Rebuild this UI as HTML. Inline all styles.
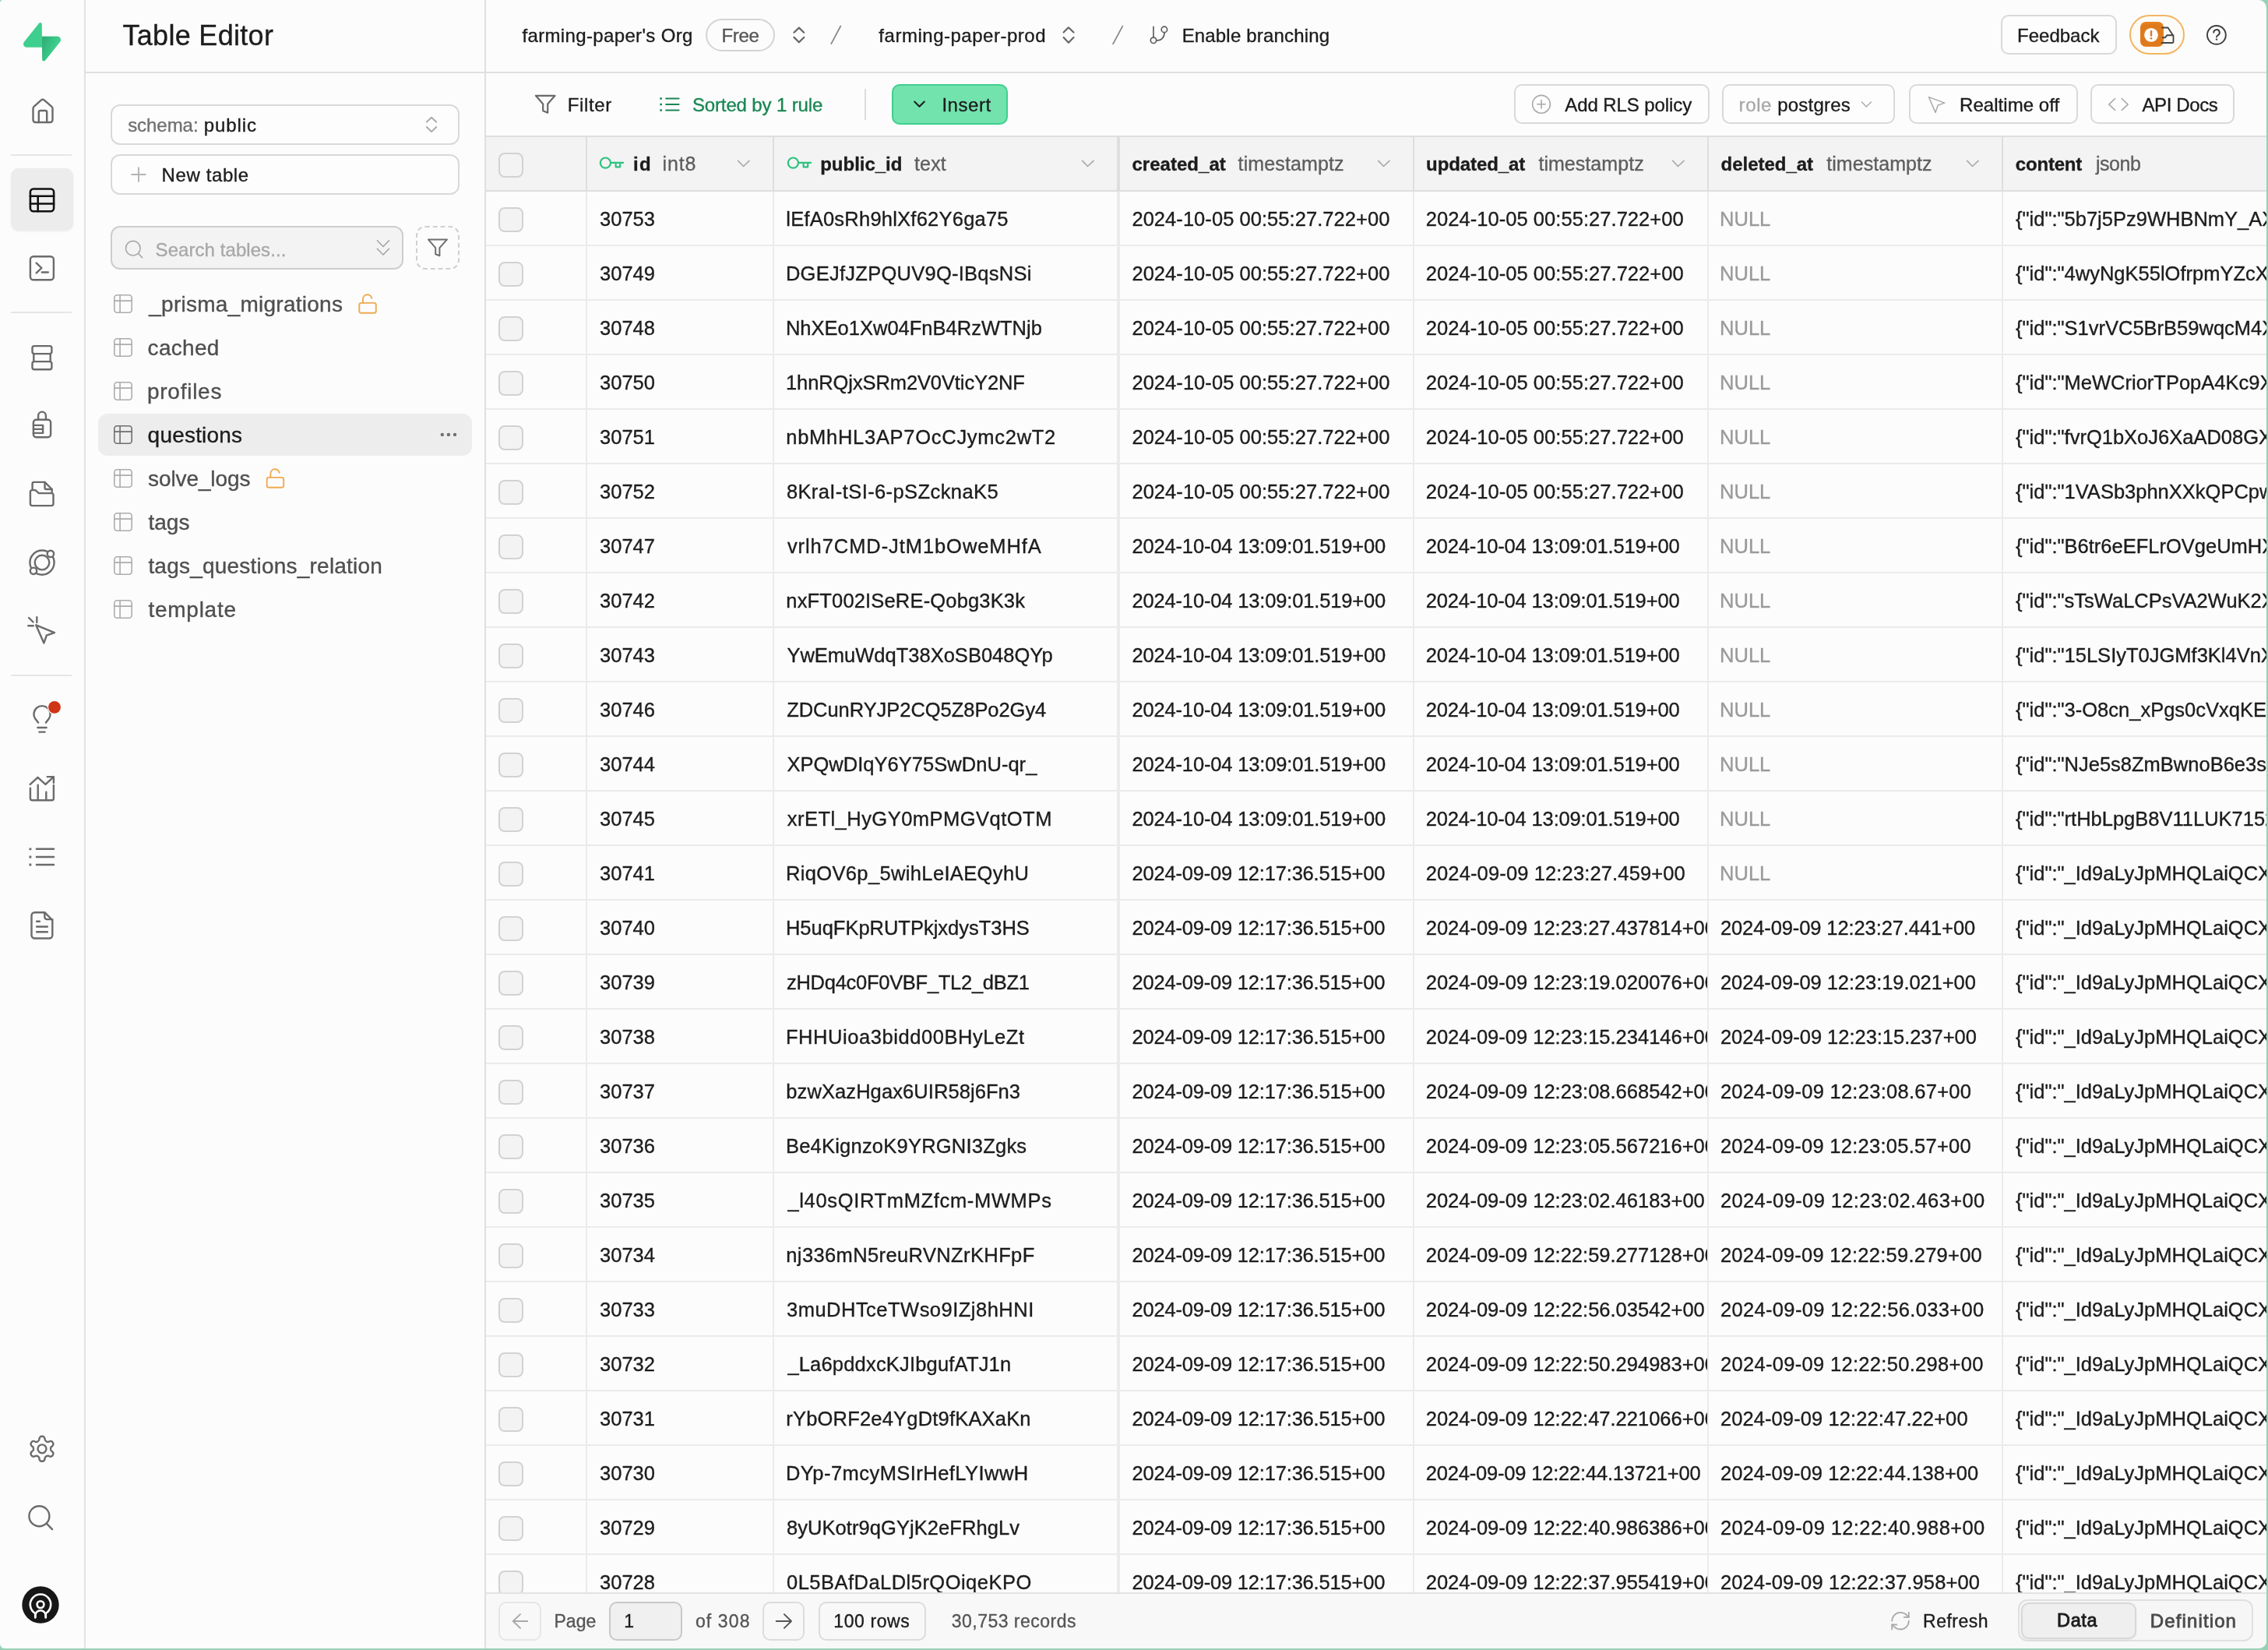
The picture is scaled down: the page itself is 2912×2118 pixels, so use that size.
<!DOCTYPE html><html><head><meta charset="utf-8"><style>
html,body{margin:0;padding:0;width:2912px;height:2118px;overflow:hidden;background:#97d1b5;}
#win{will-change:transform;position:absolute;left:0;top:0;width:2910px;height:2116px;background:#fcfcfc;border-radius:4px 10px 10px 6px;overflow:hidden;font-family:"Liberation Sans",sans-serif;}
.t{position:absolute;white-space:nowrap;-webkit-text-stroke:0.35px currentColor;}
.clip{position:absolute;overflow:hidden;}
</style></head><body><div id="win">
<div style="position:absolute;left:108px;top:0px;width:2px;height:2116px;background:#e2e2e2"></div>
<div style="position:absolute;left:14px;top:198px;width:78px;height:2px;background:#e6e6e6"></div>
<div style="position:absolute;left:14px;top:400px;width:78px;height:2px;background:#e6e6e6"></div>
<div style="position:absolute;left:14px;top:866px;width:78px;height:2px;background:#e6e6e6"></div>
<div style="position:absolute;left:14px;top:216px;width:80px;height:80px;background:#ececec;border-radius:10px;box-shadow:0 1px 3px rgba(0,0,0,0.07)"></div>
<svg style="position:absolute;left:0;top:0" width="108" height="2116" viewBox="0 0 108 2116" fill="none" stroke-width="2.4" stroke-linecap="round" stroke-linejoin="round"><g stroke="#6b6b6b"><path d="M42.5 154 V139.2 a3 3 0 0 1 1.1 -2.3 L53 128.4 a3 3 0 0 1 3.6 0 L66.4 136.9 a3 3 0 0 1 1.1 2.3 V154 a3 3 0 0 1 -3 3 H45.5 a3 3 0 0 1 -3 -3 Z"/><path d="M49.8 157 V144 a2 2 0 0 1 2 -2 H58.2 a2 2 0 0 1 2 2 V157"/></g><g stroke="#111111" stroke-width="2.6"><rect x="38.9" y="242.5" width="30.2" height="28.8" rx="4"/><path d="M38.9 251.8 H69.1 M38.9 261.5 H69.1 M48.7 251.8 V271.3"/></g><g stroke="#6b6b6b"><rect x="38.9" y="329.3" width="30" height="30" rx="4"/><path d="M46.7 337.6 L53.4 344 L46.7 350.4 M53.8 349.5 H61.8"/></g><g stroke="#6b6b6b"><rect x="41.5" y="444.1" width="24.9" height="10" rx="2.5"/><path d="M43.3 454.1 V464.1 M64.7 454.1 V464.1"/><rect x="41.5" y="464.1" width="24.9" height="10.2" rx="2.5"/></g><g stroke="#6b6b6b"><path d="M49.1 538.8 V533.5 a4.9 4.9 0 0 1 9.8 0 V538.8"/><rect x="42.9" y="538.8" width="22.2" height="22.4" rx="3.5"/><path d="M42.9 545.9 H55.1 V555.9 H42.9 M42.9 550.9 H55.1"/></g><g stroke="#6b6b6b"><path d="M41.6 628.7 V620.9 a2 2 0 0 1 2 -2 H57.5 L66.7 628 V632.6"/><path d="M57.5 618.9 V626 a2 2 0 0 0 2 2 H66.7"/><path d="M38.9 646.6 V631.6 a2.5 2.5 0 0 1 2.5 -2.5 H45.4 L49.8 633.1 H66 a2.5 2.5 0 0 1 2.5 2.5 V646.6 a2.5 2.5 0 0 1 -2.5 2.5 H41.4 a2.5 2.5 0 0 1 -2.5 -2.5 Z"/></g><g stroke="#6b6b6b"><circle cx="54" cy="722.1" r="15.6"/><circle cx="54" cy="722.1" r="9.3"/><circle cx="64.9" cy="710.9" r="4.2" fill="#fcfcfc"/><circle cx="43" cy="732.8" r="4.2" fill="#fcfcfc"/></g><g stroke="#6b6b6b"><path d="M46.2 802.3 L70 812.1 L59.8 815.7 L56.4 825.4 Z"/><path d="M37 793 L42.6 798.5 M36.3 803.2 H42.8 M47.3 792.2 V799"/></g><g stroke="#6b6b6b"><path d="M49.1 927.6 L45.2 922.6 A10.6 10.6 0 1 1 62.8 922.6 L58.9 927.6"/><path d="M48.4 934 H59.6 M50.4 939.6 H57.6"/></g><circle cx="70" cy="907.8" r="9.2" fill="#fcfcfc" stroke="none"/><circle cx="70" cy="907.8" r="7.9" fill="#cf3415" stroke="none"/><g stroke="#6b6b6b"><path d="M38.9 1011.6 V1024.8 a2.5 2.5 0 0 0 2.5 2.5 H66.4 a2.5 2.5 0 0 0 2.5 -2.5 V1008 M48.7 1007.6 V1027.3 M59.3 1016.7 V1027.3 M38.7 1006.9 L48.5 997.8 L58.4 1006.9 L68.9 997.1 M60.7 997.1 H68.9 V1004.7"/></g><g stroke="#6b6b6b"><path d="M46.9 1089.8 H69.1 M46.9 1100 H69.1 M46.9 1110 H69.1"/><path d="M38.9 1089.8 h0.01 M38.9 1100 h0.01 M38.9 1110 h0.01" stroke-width="2.8" stroke-linecap="square"/></g><g stroke="#6b6b6b"><path d="M57.3 1171.2 H44.5 a4 4 0 0 0 -4 4 V1200.5 a4 4 0 0 0 4 4 H63.3 a4 4 0 0 0 4 -4 V1181.2 Z"/><path d="M57.3 1171.2 V1177.1 a3 3 0 0 0 3 3 H67.3"/><path d="M47.1 1182.8 H50.9 M47.1 1189.5 H60.9 M47.1 1196.3 H60.9"/></g><g stroke="#6b6b6b" transform="translate(34.8 1840.6) scale(1.6)" stroke-width="1.5"><path d="M12.22 2h-.44a2 2 0 0 0-2 2v.18a2 2 0 0 1-1 1.73l-.43.25a2 2 0 0 1-2 0l-.15-.08a2 2 0 0 0-2.73.73l-.22.38a2 2 0 0 0 .73 2.73l.15.1a2 2 0 0 1 1 1.72v.51a2 2 0 0 1-1 1.74l-.15.09a2 2 0 0 0-.73 2.73l.22.38a2 2 0 0 0 2.73.73l.15-.08a2 2 0 0 1 2 0l.43.25a2 2 0 0 1 1 1.73V20a2 2 0 0 0 2 2h.44a2 2 0 0 0 2-2v-.18a2 2 0 0 1 1-1.73l.43-.25a2 2 0 0 1 2 0l.15.08a2 2 0 0 0 2.73-.73l.22-.39a2 2 0 0 0-.73-2.73l-.15-.08a2 2 0 0 1-1-1.74v-.5a2 2 0 0 1 1-1.74l.15-.09a2 2 0 0 0 .73-2.73l-.22-.38a2 2 0 0 0-2.73-.73l-.15.08a2 2 0 0 1-2 0l-.43-.25a2 2 0 0 1-1-1.73V4a2 2 0 0 0-2-2z"/><circle cx="12" cy="12" r="3.4"/></g><g stroke="#6b6b6b"><circle cx="50.4" cy="1946.2" r="13"/><path d="M60 1955.8 L67.1 1963.1"/></g><circle cx="52" cy="2060" r="23.7" fill="#171717" stroke="none"/><g stroke="#ffffff" stroke-width="2.6"><path d="M45.2 2076.2 V2071 A13.2 13.2 0 1 1 58.8 2071 V2076.2"/><circle cx="52" cy="2059.6" r="4.4"/><path d="M45.3 2076.2 V2073.9 a6.7 6.7 0 0 1 13.4 0 V2076.2"/></g></svg>
<svg style="position:absolute;left:30px;top:29.1px" width="48" height="49.8" viewBox="0 0 109 113">
<defs><linearGradient id="lg1" x1="53.97" y1="54.97" x2="94.16" y2="71.83" gradientUnits="userSpaceOnUse"><stop stop-color="#249361"/><stop offset="1" stop-color="#3ECF8E"/></linearGradient></defs>
<path d="M63.708 110.284C60.848 113.885 55.050 111.912 54.981 107.314L53.974 40.063L99.194 40.063C107.384 40.063 111.952 49.523 106.859 55.937L63.708 110.284Z" fill="#3ecf8e"/>
<path d="M63.708 110.284C60.848 113.885 55.050 111.912 54.981 107.314L53.974 40.063L99.194 40.063C107.384 40.063 111.952 49.523 106.859 55.937L63.708 110.284Z" fill="url(#lg1)" fill-opacity="0.55"/>
<path d="M45.317 2.071C48.177 -1.530 53.976 0.443 54.044 5.041L54.486 72.292H9.831C1.640 72.292 -2.928 62.832 2.166 56.418L45.317 2.071Z" fill="#3ecf8e"/>
</svg>
<div style="position:absolute;left:622px;top:0px;width:2px;height:2116px;background:#e0e0e0"></div>
<div style="position:absolute;left:110px;top:92px;width:512px;height:2px;background:#e0e0e0"></div>
<div class="t" style="left:157.49px;top:27.83px;font-size:36px;line-height:36px;color:#1c1c1c;font-weight:normal;letter-spacing:0.301px;">Table Editor</div>
<div style="position:absolute;left:142px;top:134px;width:448px;height:52px;box-sizing:border-box;border:2px solid #d9d9d9;border-radius:12px;background:#fdfdfd"></div>
<div class="t" style="left:164.13px;top:148.68px;font-size:24px;line-height:24px;color:#707070;font-weight:normal;letter-spacing:-0.041px;">schema:</div>
<div class="t" style="left:261.75px;top:148.68px;font-size:24px;line-height:24px;color:#1c1c1c;font-weight:normal;letter-spacing:0.895px;">public</div>
<div style="position:absolute;left:142px;top:198px;width:448px;height:52px;box-sizing:border-box;border:2px solid #d9d9d9;border-radius:12px;background:#fdfdfd"></div>
<div class="t" style="left:207.53px;top:212.98px;font-size:24px;line-height:24px;color:#1c1c1c;font-weight:normal;letter-spacing:0.614px;">New table</div>
<div style="position:absolute;left:142px;top:290px;width:376px;height:56px;box-sizing:border-box;border:2px solid #cdcdcd;border-radius:12px;background:#f3f3f3"></div>
<div class="t" style="left:199.61px;top:308.68px;font-size:24px;line-height:24px;color:#a8a8a8;font-weight:normal;letter-spacing:0.062px;">Search tables...</div>
<div style="position:absolute;left:534px;top:290px;width:56px;height:56px;box-sizing:border-box;border:2px dashed #d0d0d0;border-radius:12px"></div>
<div style="position:absolute;left:126px;top:531px;width:480px;height:54px;background:#ededed;border-radius:12px"></div>
<div class="t" style="left:191.22px;top:376.70px;font-size:28px;line-height:28px;color:#4f4f4f;font-weight:normal;letter-spacing:0.257px;">_prisma_migrations</div>
<div class="t" style="left:189.61px;top:432.70px;font-size:28px;line-height:28px;color:#4f4f4f;font-weight:normal;letter-spacing:0.281px;">cached</div>
<div class="t" style="left:189.00px;top:488.70px;font-size:28px;line-height:28px;color:#4f4f4f;font-weight:normal;letter-spacing:0.736px;">profiles</div>
<div class="t" style="left:189.62px;top:544.70px;font-size:28px;line-height:28px;color:#1c1c1c;font-weight:normal;letter-spacing:0.203px;">questions</div>
<div class="t" style="left:190.02px;top:600.70px;font-size:28px;line-height:28px;color:#4f4f4f;font-weight:normal;letter-spacing:-0.101px;">solve_logs</div>
<div class="t" style="left:190.38px;top:656.70px;font-size:28px;line-height:28px;color:#4f4f4f;font-weight:normal;letter-spacing:0.037px;">tags</div>
<div class="t" style="left:190.38px;top:712.70px;font-size:28px;line-height:28px;color:#4f4f4f;font-weight:normal;letter-spacing:0.217px;">tags_questions_relation</div>
<div class="t" style="left:190.38px;top:768.70px;font-size:28px;line-height:28px;color:#4f4f4f;font-weight:normal;letter-spacing:0.754px;">template</div>
<div style="position:absolute;left:624px;top:92px;width:2286px;height:2px;background:#e0e0e0"></div>
<div class="t" style="left:670.46px;top:33.58px;font-size:24px;line-height:24px;color:#1c1c1c;font-weight:normal;letter-spacing:0.351px;">farming-paper's Org</div>
<div style="position:absolute;left:906px;top:24px;width:89px;height:42px;box-sizing:border-box;border:2px solid #d4d4d4;border-radius:21px"></div>
<div class="t" style="left:926.43px;top:33.58px;font-size:24px;line-height:24px;color:#555555;font-weight:normal;letter-spacing:-0.338px;">Free</div>
<div class="t" style="left:1128.36px;top:33.58px;font-size:24px;line-height:24px;color:#1c1c1c;font-weight:normal;letter-spacing:0.515px;">farming-paper-prod</div>
<div class="t" style="left:1517.63px;top:33.58px;font-size:24px;line-height:24px;color:#1c1c1c;font-weight:normal;letter-spacing:0.174px;">Enable branching</div>
<div style="position:absolute;left:2569px;top:19px;width:149px;height:51px;box-sizing:border-box;border:2px solid #d9d9d9;border-radius:10px;background:#fdfdfd"></div>
<div class="t" style="left:2590.03px;top:33.58px;font-size:24px;line-height:24px;color:#1c1c1c;font-weight:normal;letter-spacing:0.005px;">Feedback</div>
<div style="position:absolute;left:2734px;top:19px;width:71px;height:51px;box-sizing:border-box;border:2.5px solid #f3b562;border-radius:26px;background:#fdfbf7"></div>
<div style="position:absolute;left:2748px;top:28px;width:30px;height:32px;background:#e5801f;border-radius:7px"></div>
<div class="t" style="left:728.63px;top:122.68px;font-size:24px;line-height:24px;color:#1c1c1c;font-weight:normal;letter-spacing:0.667px;">Filter</div>
<div class="t" style="left:888.91px;top:122.68px;font-size:24px;line-height:24px;color:#1a8754;font-weight:normal;letter-spacing:-0.132px;">Sorted by 1 rule</div>
<div style="position:absolute;left:1110px;top:114px;width:2px;height:40px;background:#dcdcdc"></div>
<div style="position:absolute;left:1145px;top:108px;width:149px;height:52px;box-sizing:border-box;border:2px solid #3ecf8e;border-radius:10px;background:#72e3ad"></div>
<div class="t" style="left:1209.39px;top:122.68px;font-size:24px;line-height:24px;color:#1c1c1c;font-weight:normal;letter-spacing:0.553px;">Insert</div>
<div style="position:absolute;left:1944px;top:108px;width:251px;height:51px;box-sizing:border-box;border:2px solid #d9d9d9;border-radius:10px;background:#fdfdfd"></div>
<div class="t" style="left:2009.35px;top:122.68px;font-size:24px;line-height:24px;color:#1c1c1c;font-weight:normal;letter-spacing:-0.092px;">Add RLS policy</div>
<div style="position:absolute;left:2211px;top:108px;width:222px;height:51px;box-sizing:border-box;border:2px solid #d9d9d9;border-radius:10px;background:#fdfdfd"></div>
<div class="t" style="left:2232.61px;top:122.68px;font-size:24px;line-height:24px;color:#a8a8a8;font-weight:normal;letter-spacing:0.614px;">role</div>
<div class="t" style="left:2282.15px;top:122.68px;font-size:24px;line-height:24px;color:#1c1c1c;font-weight:normal;letter-spacing:0.223px;">postgres</div>
<div style="position:absolute;left:2451px;top:108px;width:217px;height:51px;box-sizing:border-box;border:2px solid #d9d9d9;border-radius:10px;background:#fdfdfd"></div>
<div class="t" style="left:2516.03px;top:122.68px;font-size:24px;line-height:24px;color:#1c1c1c;font-weight:normal;letter-spacing:0.053px;">Realtime off</div>
<div style="position:absolute;left:2684px;top:108px;width:185px;height:51px;box-sizing:border-box;border:2px solid #d9d9d9;border-radius:10px;background:#fdfdfd"></div>
<div class="t" style="left:2750.45px;top:122.68px;font-size:24px;line-height:24px;color:#1c1c1c;font-weight:normal;letter-spacing:-0.374px;">API Docs</div>
<div style="position:absolute;left:624px;top:174px;width:2286px;height:2px;background:#dedede"></div>
<div style="position:absolute;left:624px;top:176px;width:2286px;height:68px;background:#f3f3f3"></div>
<div style="position:absolute;left:624px;top:244px;width:2286px;height:2px;background:#dedede"></div>
<div style="position:absolute;left:624px;top:314px;width:2286px;height:2px;background:#ebebeb"></div>
<div style="position:absolute;left:624px;top:384px;width:2286px;height:2px;background:#ebebeb"></div>
<div style="position:absolute;left:624px;top:454px;width:2286px;height:2px;background:#ebebeb"></div>
<div style="position:absolute;left:624px;top:524px;width:2286px;height:2px;background:#ebebeb"></div>
<div style="position:absolute;left:624px;top:594px;width:2286px;height:2px;background:#ebebeb"></div>
<div style="position:absolute;left:624px;top:664px;width:2286px;height:2px;background:#ebebeb"></div>
<div style="position:absolute;left:624px;top:734px;width:2286px;height:2px;background:#ebebeb"></div>
<div style="position:absolute;left:624px;top:804px;width:2286px;height:2px;background:#ebebeb"></div>
<div style="position:absolute;left:624px;top:874px;width:2286px;height:2px;background:#ebebeb"></div>
<div style="position:absolute;left:624px;top:944px;width:2286px;height:2px;background:#ebebeb"></div>
<div style="position:absolute;left:624px;top:1014px;width:2286px;height:2px;background:#ebebeb"></div>
<div style="position:absolute;left:624px;top:1084px;width:2286px;height:2px;background:#ebebeb"></div>
<div style="position:absolute;left:624px;top:1154px;width:2286px;height:2px;background:#ebebeb"></div>
<div style="position:absolute;left:624px;top:1224px;width:2286px;height:2px;background:#ebebeb"></div>
<div style="position:absolute;left:624px;top:1294px;width:2286px;height:2px;background:#ebebeb"></div>
<div style="position:absolute;left:624px;top:1364px;width:2286px;height:2px;background:#ebebeb"></div>
<div style="position:absolute;left:624px;top:1434px;width:2286px;height:2px;background:#ebebeb"></div>
<div style="position:absolute;left:624px;top:1504px;width:2286px;height:2px;background:#ebebeb"></div>
<div style="position:absolute;left:624px;top:1574px;width:2286px;height:2px;background:#ebebeb"></div>
<div style="position:absolute;left:624px;top:1644px;width:2286px;height:2px;background:#ebebeb"></div>
<div style="position:absolute;left:624px;top:1714px;width:2286px;height:2px;background:#ebebeb"></div>
<div style="position:absolute;left:624px;top:1784px;width:2286px;height:2px;background:#ebebeb"></div>
<div style="position:absolute;left:624px;top:1854px;width:2286px;height:2px;background:#ebebeb"></div>
<div style="position:absolute;left:624px;top:1924px;width:2286px;height:2px;background:#ebebeb"></div>
<div style="position:absolute;left:624px;top:1994px;width:2286px;height:2px;background:#ebebeb"></div>
<div style="position:absolute;left:752px;top:176px;width:2px;height:68px;background:#dedede"></div>
<div style="position:absolute;left:752px;top:246px;width:2px;height:1798px;background:#ebebeb"></div>
<div style="position:absolute;left:992px;top:176px;width:2px;height:68px;background:#dedede"></div>
<div style="position:absolute;left:992px;top:246px;width:2px;height:1798px;background:#ebebeb"></div>
<div style="position:absolute;left:1434px;top:176px;width:4px;height:68px;background:#dedede"></div>
<div style="position:absolute;left:1434px;top:246px;width:4px;height:1798px;background:#ebebeb"></div>
<div style="position:absolute;left:1814px;top:176px;width:2px;height:68px;background:#dedede"></div>
<div style="position:absolute;left:1814px;top:246px;width:2px;height:1798px;background:#ebebeb"></div>
<div style="position:absolute;left:2192px;top:176px;width:2px;height:68px;background:#dedede"></div>
<div style="position:absolute;left:2192px;top:246px;width:2px;height:1798px;background:#ebebeb"></div>
<div style="position:absolute;left:2570px;top:176px;width:2px;height:68px;background:#dedede"></div>
<div style="position:absolute;left:2570px;top:246px;width:2px;height:1798px;background:#ebebeb"></div>
<div style="position:absolute;left:640px;top:196px;width:32px;height:32px;box-sizing:border-box;border:2px solid #d2d2d2;border-radius:8px;background:#f3f3f3"></div>
<div class="t" style="left:813.02px;top:198.98px;font-size:24px;line-height:24px;color:#1c1c1c;font-weight:bold;letter-spacing:1.430px;">id</div>
<div class="t" style="left:850.53px;top:198.14px;font-size:25px;line-height:25px;color:#5e5e5e;font-weight:normal;letter-spacing:0.884px;">int8</div>
<div class="t" style="left:1053.22px;top:198.98px;font-size:24px;line-height:24px;color:#1c1c1c;font-weight:bold;letter-spacing:-0.022px;">public_id</div>
<div class="t" style="left:1174.02px;top:198.14px;font-size:25px;line-height:25px;color:#5e5e5e;font-weight:normal;letter-spacing:0.155px;">text</div>
<div class="t" style="left:1453.46px;top:198.98px;font-size:24px;line-height:24px;color:#1c1c1c;font-weight:bold;letter-spacing:0.029px;">created_at</div>
<div class="t" style="left:1589.62px;top:198.14px;font-size:25px;line-height:25px;color:#5e5e5e;font-weight:normal;letter-spacing:0.117px;">timestamptz</div>
<div class="t" style="left:1831.11px;top:198.98px;font-size:24px;line-height:24px;color:#1c1c1c;font-weight:bold;letter-spacing:-0.093px;">updated_at</div>
<div class="t" style="left:1975.42px;top:198.14px;font-size:25px;line-height:25px;color:#5e5e5e;font-weight:normal;letter-spacing:0.047px;">timestamptz</div>
<div class="t" style="left:2209.52px;top:198.98px;font-size:24px;line-height:24px;color:#1c1c1c;font-weight:bold;letter-spacing:-0.015px;">deleted_at</div>
<div class="t" style="left:2345.22px;top:198.14px;font-size:25px;line-height:25px;color:#5e5e5e;font-weight:normal;letter-spacing:0.047px;">timestamptz</div>
<div class="t" style="left:2587.86px;top:198.98px;font-size:24px;line-height:24px;color:#1c1c1c;font-weight:bold;letter-spacing:-0.205px;">content</div>
<div class="t" style="left:2691.01px;top:198.14px;font-size:25px;line-height:25px;color:#5e5e5e;font-weight:normal;letter-spacing:-0.482px;">jsonb</div>
<div style="position:absolute;left:640px;top:266px;width:32px;height:32px;box-sizing:border-box;border:2px solid #d2d2d2;border-radius:8px;background:#f3f3f3"></div>
<div class="clip" style="left:754px;top:246px;width:238px;height:68px"><div class="t" style="left:16.03px;top:22.71px;font-size:25.5px;line-height:25.5px;color:#1c1c1c;font-weight:normal;">30753</div></div>
<div class="clip" style="left:994px;top:246px;width:440px;height:68px"><div class="t" style="left:15.28px;top:22.71px;font-size:25.5px;line-height:25.5px;color:#1c1c1c;font-weight:normal;letter-spacing:0.229px;">lEfA0sRh9hlXf62Y6ga75</div></div>
<div class="clip" style="left:1438px;top:246px;width:376px;height:68px"><div class="t" style="left:15.42px;top:22.71px;font-size:25.5px;line-height:25.5px;color:#1c1c1c;font-weight:normal;letter-spacing:0.052px;">2024-10-05 00:55:27.722+00</div></div>
<div class="clip" style="left:1816px;top:246px;width:376px;height:68px"><div class="t" style="left:14.72px;top:22.71px;font-size:25.5px;line-height:25.5px;color:#1c1c1c;font-weight:normal;letter-spacing:0.052px;">2024-10-05 00:55:27.722+00</div></div>
<div class="clip" style="left:2194px;top:246px;width:376px;height:68px"><div class="t" style="left:14.11px;top:22.71px;font-size:25.5px;line-height:25.5px;color:#9a9a9a;font-weight:normal;">NULL</div></div>
<div class="clip" style="left:2572px;top:246px;width:338px;height:68px"><div class="t" style="left:15.98px;top:22.71px;font-size:25.5px;line-height:25.5px;color:#1c1c1c;font-weight:normal;">{"id":"5b7j5Pz9WHBNmY_AXkQ7vPz2LmN</div></div>
<div style="position:absolute;left:640px;top:336px;width:32px;height:32px;box-sizing:border-box;border:2px solid #d2d2d2;border-radius:8px;background:#f3f3f3"></div>
<div class="clip" style="left:754px;top:316px;width:238px;height:68px"><div class="t" style="left:16.03px;top:22.71px;font-size:25.5px;line-height:25.5px;color:#1c1c1c;font-weight:normal;">30749</div></div>
<div class="clip" style="left:994px;top:316px;width:440px;height:68px"><div class="t" style="left:14.91px;top:22.71px;font-size:25.5px;line-height:25.5px;color:#1c1c1c;font-weight:normal;letter-spacing:0.260px;">DGEJfJZPQUV9Q-IBqsNSi</div></div>
<div class="clip" style="left:1438px;top:316px;width:376px;height:68px"><div class="t" style="left:15.42px;top:22.71px;font-size:25.5px;line-height:25.5px;color:#1c1c1c;font-weight:normal;letter-spacing:0.052px;">2024-10-05 00:55:27.722+00</div></div>
<div class="clip" style="left:1816px;top:316px;width:376px;height:68px"><div class="t" style="left:14.72px;top:22.71px;font-size:25.5px;line-height:25.5px;color:#1c1c1c;font-weight:normal;letter-spacing:0.052px;">2024-10-05 00:55:27.722+00</div></div>
<div class="clip" style="left:2194px;top:316px;width:376px;height:68px"><div class="t" style="left:14.11px;top:22.71px;font-size:25.5px;line-height:25.5px;color:#9a9a9a;font-weight:normal;">NULL</div></div>
<div class="clip" style="left:2572px;top:316px;width:338px;height:68px"><div class="t" style="left:15.98px;top:22.71px;font-size:25.5px;line-height:25.5px;color:#1c1c1c;font-weight:normal;">{"id":"4wyNgK55lOfrpmYZcXkQ7vPz2LmN</div></div>
<div style="position:absolute;left:640px;top:406px;width:32px;height:32px;box-sizing:border-box;border:2px solid #d2d2d2;border-radius:8px;background:#f3f3f3"></div>
<div class="clip" style="left:754px;top:386px;width:238px;height:68px"><div class="t" style="left:16.03px;top:22.71px;font-size:25.5px;line-height:25.5px;color:#1c1c1c;font-weight:normal;">30748</div></div>
<div class="clip" style="left:994px;top:386px;width:440px;height:68px"><div class="t" style="left:14.91px;top:22.71px;font-size:25.5px;line-height:25.5px;color:#1c1c1c;font-weight:normal;letter-spacing:0.009px;">NhXEo1Xw04FnB4RzWTNjb</div></div>
<div class="clip" style="left:1438px;top:386px;width:376px;height:68px"><div class="t" style="left:15.42px;top:22.71px;font-size:25.5px;line-height:25.5px;color:#1c1c1c;font-weight:normal;letter-spacing:0.052px;">2024-10-05 00:55:27.722+00</div></div>
<div class="clip" style="left:1816px;top:386px;width:376px;height:68px"><div class="t" style="left:14.72px;top:22.71px;font-size:25.5px;line-height:25.5px;color:#1c1c1c;font-weight:normal;letter-spacing:0.052px;">2024-10-05 00:55:27.722+00</div></div>
<div class="clip" style="left:2194px;top:386px;width:376px;height:68px"><div class="t" style="left:14.11px;top:22.71px;font-size:25.5px;line-height:25.5px;color:#9a9a9a;font-weight:normal;">NULL</div></div>
<div class="clip" style="left:2572px;top:386px;width:338px;height:68px"><div class="t" style="left:15.98px;top:22.71px;font-size:25.5px;line-height:25.5px;color:#1c1c1c;font-weight:normal;">{"id":"S1vrVC5BrB59wqcM4XkQ7vPz2LmN</div></div>
<div style="position:absolute;left:640px;top:476px;width:32px;height:32px;box-sizing:border-box;border:2px solid #d2d2d2;border-radius:8px;background:#f3f3f3"></div>
<div class="clip" style="left:754px;top:456px;width:238px;height:68px"><div class="t" style="left:16.03px;top:22.71px;font-size:25.5px;line-height:25.5px;color:#1c1c1c;font-weight:normal;">30750</div></div>
<div class="clip" style="left:994px;top:456px;width:440px;height:68px"><div class="t" style="left:15.06px;top:22.71px;font-size:25.5px;line-height:25.5px;color:#1c1c1c;font-weight:normal;letter-spacing:-0.104px;">1hnRQjxSRm2V0VticY2NF</div></div>
<div class="clip" style="left:1438px;top:456px;width:376px;height:68px"><div class="t" style="left:15.42px;top:22.71px;font-size:25.5px;line-height:25.5px;color:#1c1c1c;font-weight:normal;letter-spacing:0.052px;">2024-10-05 00:55:27.722+00</div></div>
<div class="clip" style="left:1816px;top:456px;width:376px;height:68px"><div class="t" style="left:14.72px;top:22.71px;font-size:25.5px;line-height:25.5px;color:#1c1c1c;font-weight:normal;letter-spacing:0.052px;">2024-10-05 00:55:27.722+00</div></div>
<div class="clip" style="left:2194px;top:456px;width:376px;height:68px"><div class="t" style="left:14.11px;top:22.71px;font-size:25.5px;line-height:25.5px;color:#9a9a9a;font-weight:normal;">NULL</div></div>
<div class="clip" style="left:2572px;top:456px;width:338px;height:68px"><div class="t" style="left:15.98px;top:22.71px;font-size:25.5px;line-height:25.5px;color:#1c1c1c;font-weight:normal;">{"id":"MeWCriorTPopA4Kc9XkQ7vPz2LmN</div></div>
<div style="position:absolute;left:640px;top:546px;width:32px;height:32px;box-sizing:border-box;border:2px solid #d2d2d2;border-radius:8px;background:#f3f3f3"></div>
<div class="clip" style="left:754px;top:526px;width:238px;height:68px"><div class="t" style="left:16.03px;top:22.71px;font-size:25.5px;line-height:25.5px;color:#1c1c1c;font-weight:normal;">30751</div></div>
<div class="clip" style="left:994px;top:526px;width:440px;height:68px"><div class="t" style="left:15.31px;top:22.71px;font-size:25.5px;line-height:25.5px;color:#1c1c1c;font-weight:normal;letter-spacing:0.718px;">nbMhHL3AP7OcCJymc2wT2</div></div>
<div class="clip" style="left:1438px;top:526px;width:376px;height:68px"><div class="t" style="left:15.42px;top:22.71px;font-size:25.5px;line-height:25.5px;color:#1c1c1c;font-weight:normal;letter-spacing:0.052px;">2024-10-05 00:55:27.722+00</div></div>
<div class="clip" style="left:1816px;top:526px;width:376px;height:68px"><div class="t" style="left:14.72px;top:22.71px;font-size:25.5px;line-height:25.5px;color:#1c1c1c;font-weight:normal;letter-spacing:0.052px;">2024-10-05 00:55:27.722+00</div></div>
<div class="clip" style="left:2194px;top:526px;width:376px;height:68px"><div class="t" style="left:14.11px;top:22.71px;font-size:25.5px;line-height:25.5px;color:#9a9a9a;font-weight:normal;">NULL</div></div>
<div class="clip" style="left:2572px;top:526px;width:338px;height:68px"><div class="t" style="left:15.98px;top:22.71px;font-size:25.5px;line-height:25.5px;color:#1c1c1c;font-weight:normal;">{"id":"fvrQ1bXoJ6XaAD08GXkQ7vPz2LmN</div></div>
<div style="position:absolute;left:640px;top:616px;width:32px;height:32px;box-sizing:border-box;border:2px solid #d2d2d2;border-radius:8px;background:#f3f3f3"></div>
<div class="clip" style="left:754px;top:596px;width:238px;height:68px"><div class="t" style="left:16.03px;top:22.71px;font-size:25.5px;line-height:25.5px;color:#1c1c1c;font-weight:normal;">30752</div></div>
<div class="clip" style="left:994px;top:596px;width:440px;height:68px"><div class="t" style="left:15.89px;top:22.71px;font-size:25.5px;line-height:25.5px;color:#1c1c1c;font-weight:normal;letter-spacing:0.404px;">8KraI-tSI-6-pSZcknaK5</div></div>
<div class="clip" style="left:1438px;top:596px;width:376px;height:68px"><div class="t" style="left:15.42px;top:22.71px;font-size:25.5px;line-height:25.5px;color:#1c1c1c;font-weight:normal;letter-spacing:0.052px;">2024-10-05 00:55:27.722+00</div></div>
<div class="clip" style="left:1816px;top:596px;width:376px;height:68px"><div class="t" style="left:14.72px;top:22.71px;font-size:25.5px;line-height:25.5px;color:#1c1c1c;font-weight:normal;letter-spacing:0.052px;">2024-10-05 00:55:27.722+00</div></div>
<div class="clip" style="left:2194px;top:596px;width:376px;height:68px"><div class="t" style="left:14.11px;top:22.71px;font-size:25.5px;line-height:25.5px;color:#9a9a9a;font-weight:normal;">NULL</div></div>
<div class="clip" style="left:2572px;top:596px;width:338px;height:68px"><div class="t" style="left:15.98px;top:22.71px;font-size:25.5px;line-height:25.5px;color:#1c1c1c;font-weight:normal;">{"id":"1VASb3phnXXkQPCpwXkQ7vPz2LmN</div></div>
<div style="position:absolute;left:640px;top:686px;width:32px;height:32px;box-sizing:border-box;border:2px solid #d2d2d2;border-radius:8px;background:#f3f3f3"></div>
<div class="clip" style="left:754px;top:666px;width:238px;height:68px"><div class="t" style="left:16.03px;top:22.71px;font-size:25.5px;line-height:25.5px;color:#1c1c1c;font-weight:normal;">30747</div></div>
<div class="clip" style="left:994px;top:666px;width:440px;height:68px"><div class="t" style="left:16.91px;top:22.71px;font-size:25.5px;line-height:25.5px;color:#1c1c1c;font-weight:normal;letter-spacing:0.924px;">vrlh7CMD-JtM1bOweMHfA</div></div>
<div class="clip" style="left:1438px;top:666px;width:376px;height:68px"><div class="t" style="left:15.42px;top:22.71px;font-size:25.5px;line-height:25.5px;color:#1c1c1c;font-weight:normal;letter-spacing:-0.152px;">2024-10-04 13:09:01.519+00</div></div>
<div class="clip" style="left:1816px;top:666px;width:376px;height:68px"><div class="t" style="left:14.72px;top:22.71px;font-size:25.5px;line-height:25.5px;color:#1c1c1c;font-weight:normal;letter-spacing:-0.152px;">2024-10-04 13:09:01.519+00</div></div>
<div class="clip" style="left:2194px;top:666px;width:376px;height:68px"><div class="t" style="left:14.11px;top:22.71px;font-size:25.5px;line-height:25.5px;color:#9a9a9a;font-weight:normal;">NULL</div></div>
<div class="clip" style="left:2572px;top:666px;width:338px;height:68px"><div class="t" style="left:15.98px;top:22.71px;font-size:25.5px;line-height:25.5px;color:#1c1c1c;font-weight:normal;">{"id":"B6tr6eEFLrOVgeUmHXkQ7vPz2LmN</div></div>
<div style="position:absolute;left:640px;top:756px;width:32px;height:32px;box-sizing:border-box;border:2px solid #d2d2d2;border-radius:8px;background:#f3f3f3"></div>
<div class="clip" style="left:754px;top:736px;width:238px;height:68px"><div class="t" style="left:16.03px;top:22.71px;font-size:25.5px;line-height:25.5px;color:#1c1c1c;font-weight:normal;">30742</div></div>
<div class="clip" style="left:994px;top:736px;width:440px;height:68px"><div class="t" style="left:15.31px;top:22.71px;font-size:25.5px;line-height:25.5px;color:#1c1c1c;font-weight:normal;letter-spacing:0.167px;">nxFT002ISeRE-Qobg3K3k</div></div>
<div class="clip" style="left:1438px;top:736px;width:376px;height:68px"><div class="t" style="left:15.42px;top:22.71px;font-size:25.5px;line-height:25.5px;color:#1c1c1c;font-weight:normal;letter-spacing:-0.152px;">2024-10-04 13:09:01.519+00</div></div>
<div class="clip" style="left:1816px;top:736px;width:376px;height:68px"><div class="t" style="left:14.72px;top:22.71px;font-size:25.5px;line-height:25.5px;color:#1c1c1c;font-weight:normal;letter-spacing:-0.152px;">2024-10-04 13:09:01.519+00</div></div>
<div class="clip" style="left:2194px;top:736px;width:376px;height:68px"><div class="t" style="left:14.11px;top:22.71px;font-size:25.5px;line-height:25.5px;color:#9a9a9a;font-weight:normal;">NULL</div></div>
<div class="clip" style="left:2572px;top:736px;width:338px;height:68px"><div class="t" style="left:15.98px;top:22.71px;font-size:25.5px;line-height:25.5px;color:#1c1c1c;font-weight:normal;">{"id":"sTsWaLCPsVA2WuK2XkQ7vPz2LmN</div></div>
<div style="position:absolute;left:640px;top:826px;width:32px;height:32px;box-sizing:border-box;border:2px solid #d2d2d2;border-radius:8px;background:#f3f3f3"></div>
<div class="clip" style="left:754px;top:806px;width:238px;height:68px"><div class="t" style="left:16.03px;top:22.71px;font-size:25.5px;line-height:25.5px;color:#1c1c1c;font-weight:normal;">30743</div></div>
<div class="clip" style="left:994px;top:806px;width:440px;height:68px"><div class="t" style="left:16.44px;top:22.71px;font-size:25.5px;line-height:25.5px;color:#1c1c1c;font-weight:normal;letter-spacing:0.001px;">YwEmuWdqT38XoSB048QYp</div></div>
<div class="clip" style="left:1438px;top:806px;width:376px;height:68px"><div class="t" style="left:15.42px;top:22.71px;font-size:25.5px;line-height:25.5px;color:#1c1c1c;font-weight:normal;letter-spacing:-0.152px;">2024-10-04 13:09:01.519+00</div></div>
<div class="clip" style="left:1816px;top:806px;width:376px;height:68px"><div class="t" style="left:14.72px;top:22.71px;font-size:25.5px;line-height:25.5px;color:#1c1c1c;font-weight:normal;letter-spacing:-0.152px;">2024-10-04 13:09:01.519+00</div></div>
<div class="clip" style="left:2194px;top:806px;width:376px;height:68px"><div class="t" style="left:14.11px;top:22.71px;font-size:25.5px;line-height:25.5px;color:#9a9a9a;font-weight:normal;">NULL</div></div>
<div class="clip" style="left:2572px;top:806px;width:338px;height:68px"><div class="t" style="left:15.98px;top:22.71px;font-size:25.5px;line-height:25.5px;color:#1c1c1c;font-weight:normal;">{"id":"15LSIyT0JGMf3Kl4VnXkQ7vPz2LmN</div></div>
<div style="position:absolute;left:640px;top:896px;width:32px;height:32px;box-sizing:border-box;border:2px solid #d2d2d2;border-radius:8px;background:#f3f3f3"></div>
<div class="clip" style="left:754px;top:876px;width:238px;height:68px"><div class="t" style="left:16.03px;top:22.71px;font-size:25.5px;line-height:25.5px;color:#1c1c1c;font-weight:normal;">30746</div></div>
<div class="clip" style="left:994px;top:876px;width:440px;height:68px"><div class="t" style="left:16.19px;top:22.71px;font-size:25.5px;line-height:25.5px;color:#1c1c1c;font-weight:normal;letter-spacing:-0.045px;">ZDCunRYJP2CQ5Z8Po2Gy4</div></div>
<div class="clip" style="left:1438px;top:876px;width:376px;height:68px"><div class="t" style="left:15.42px;top:22.71px;font-size:25.5px;line-height:25.5px;color:#1c1c1c;font-weight:normal;letter-spacing:-0.152px;">2024-10-04 13:09:01.519+00</div></div>
<div class="clip" style="left:1816px;top:876px;width:376px;height:68px"><div class="t" style="left:14.72px;top:22.71px;font-size:25.5px;line-height:25.5px;color:#1c1c1c;font-weight:normal;letter-spacing:-0.152px;">2024-10-04 13:09:01.519+00</div></div>
<div class="clip" style="left:2194px;top:876px;width:376px;height:68px"><div class="t" style="left:14.11px;top:22.71px;font-size:25.5px;line-height:25.5px;color:#9a9a9a;font-weight:normal;">NULL</div></div>
<div class="clip" style="left:2572px;top:876px;width:338px;height:68px"><div class="t" style="left:15.98px;top:22.71px;font-size:25.5px;line-height:25.5px;color:#1c1c1c;font-weight:normal;">{"id":"3-O8cn_xPgs0cVxqKEXkQ7vPz2LmN</div></div>
<div style="position:absolute;left:640px;top:966px;width:32px;height:32px;box-sizing:border-box;border:2px solid #d2d2d2;border-radius:8px;background:#f3f3f3"></div>
<div class="clip" style="left:754px;top:946px;width:238px;height:68px"><div class="t" style="left:16.03px;top:22.71px;font-size:25.5px;line-height:25.5px;color:#1c1c1c;font-weight:normal;">30744</div></div>
<div class="clip" style="left:994px;top:946px;width:440px;height:68px"><div class="t" style="left:16.43px;top:22.71px;font-size:25.5px;line-height:25.5px;color:#1c1c1c;font-weight:normal;letter-spacing:0.030px;">XPQwDIqY6Y75SwDnU-qr_</div></div>
<div class="clip" style="left:1438px;top:946px;width:376px;height:68px"><div class="t" style="left:15.42px;top:22.71px;font-size:25.5px;line-height:25.5px;color:#1c1c1c;font-weight:normal;letter-spacing:-0.152px;">2024-10-04 13:09:01.519+00</div></div>
<div class="clip" style="left:1816px;top:946px;width:376px;height:68px"><div class="t" style="left:14.72px;top:22.71px;font-size:25.5px;line-height:25.5px;color:#1c1c1c;font-weight:normal;letter-spacing:-0.152px;">2024-10-04 13:09:01.519+00</div></div>
<div class="clip" style="left:2194px;top:946px;width:376px;height:68px"><div class="t" style="left:14.11px;top:22.71px;font-size:25.5px;line-height:25.5px;color:#9a9a9a;font-weight:normal;">NULL</div></div>
<div class="clip" style="left:2572px;top:946px;width:338px;height:68px"><div class="t" style="left:15.98px;top:22.71px;font-size:25.5px;line-height:25.5px;color:#1c1c1c;font-weight:normal;">{"id":"NJe5s8ZmBwnoB6e3sXkQ7vPz2LmN</div></div>
<div style="position:absolute;left:640px;top:1036px;width:32px;height:32px;box-sizing:border-box;border:2px solid #d2d2d2;border-radius:8px;background:#f3f3f3"></div>
<div class="clip" style="left:754px;top:1016px;width:238px;height:68px"><div class="t" style="left:16.03px;top:22.71px;font-size:25.5px;line-height:25.5px;color:#1c1c1c;font-weight:normal;">30745</div></div>
<div class="clip" style="left:994px;top:1016px;width:440px;height:68px"><div class="t" style="left:16.71px;top:22.71px;font-size:25.5px;line-height:25.5px;color:#1c1c1c;font-weight:normal;letter-spacing:0.478px;">xrETl_HyGY0mPMGVqtOTM</div></div>
<div class="clip" style="left:1438px;top:1016px;width:376px;height:68px"><div class="t" style="left:15.42px;top:22.71px;font-size:25.5px;line-height:25.5px;color:#1c1c1c;font-weight:normal;letter-spacing:-0.152px;">2024-10-04 13:09:01.519+00</div></div>
<div class="clip" style="left:1816px;top:1016px;width:376px;height:68px"><div class="t" style="left:14.72px;top:22.71px;font-size:25.5px;line-height:25.5px;color:#1c1c1c;font-weight:normal;letter-spacing:-0.152px;">2024-10-04 13:09:01.519+00</div></div>
<div class="clip" style="left:2194px;top:1016px;width:376px;height:68px"><div class="t" style="left:14.11px;top:22.71px;font-size:25.5px;line-height:25.5px;color:#9a9a9a;font-weight:normal;">NULL</div></div>
<div class="clip" style="left:2572px;top:1016px;width:338px;height:68px"><div class="t" style="left:15.98px;top:22.71px;font-size:25.5px;line-height:25.5px;color:#1c1c1c;font-weight:normal;">{"id":"rtHbLpgB8V11LUK7152XkQ7vPz2LmN</div></div>
<div style="position:absolute;left:640px;top:1106px;width:32px;height:32px;box-sizing:border-box;border:2px solid #d2d2d2;border-radius:8px;background:#f3f3f3"></div>
<div class="clip" style="left:754px;top:1086px;width:238px;height:68px"><div class="t" style="left:16.03px;top:22.71px;font-size:25.5px;line-height:25.5px;color:#1c1c1c;font-weight:normal;">30741</div></div>
<div class="clip" style="left:994px;top:1086px;width:440px;height:68px"><div class="t" style="left:14.91px;top:22.71px;font-size:25.5px;line-height:25.5px;color:#1c1c1c;font-weight:normal;letter-spacing:0.361px;">RiqOV6p_5wihLeIAEQyhU</div></div>
<div class="clip" style="left:1438px;top:1086px;width:376px;height:68px"><div class="t" style="left:15.42px;top:22.71px;font-size:25.5px;line-height:25.5px;color:#1c1c1c;font-weight:normal;letter-spacing:-0.188px;">2024-09-09 12:17:36.515+00</div></div>
<div class="clip" style="left:1816px;top:1086px;width:376px;height:68px"><div class="t" style="left:14.72px;top:22.71px;font-size:25.5px;line-height:25.5px;color:#1c1c1c;font-weight:normal;letter-spacing:0.136px;">2024-09-09 12:23:27.459+00</div></div>
<div class="clip" style="left:2194px;top:1086px;width:376px;height:68px"><div class="t" style="left:14.11px;top:22.71px;font-size:25.5px;line-height:25.5px;color:#9a9a9a;font-weight:normal;">NULL</div></div>
<div class="clip" style="left:2572px;top:1086px;width:338px;height:68px"><div class="t" style="left:15.98px;top:22.71px;font-size:25.5px;line-height:25.5px;color:#1c1c1c;font-weight:normal;">{"id":"_Id9aLyJpMHQLaiQCXkQ7vPz2LmN</div></div>
<div style="position:absolute;left:640px;top:1176px;width:32px;height:32px;box-sizing:border-box;border:2px solid #d2d2d2;border-radius:8px;background:#f3f3f3"></div>
<div class="clip" style="left:754px;top:1156px;width:238px;height:68px"><div class="t" style="left:16.03px;top:22.71px;font-size:25.5px;line-height:25.5px;color:#1c1c1c;font-weight:normal;">30740</div></div>
<div class="clip" style="left:994px;top:1156px;width:440px;height:68px"><div class="t" style="left:14.91px;top:22.71px;font-size:25.5px;line-height:25.5px;color:#1c1c1c;font-weight:normal;letter-spacing:-0.010px;">H5uqFKpRUTPkjxdysT3HS</div></div>
<div class="clip" style="left:1438px;top:1156px;width:376px;height:68px"><div class="t" style="left:15.42px;top:22.71px;font-size:25.5px;line-height:25.5px;color:#1c1c1c;font-weight:normal;letter-spacing:-0.188px;">2024-09-09 12:17:36.515+00</div></div>
<div class="clip" style="left:1816px;top:1156px;width:376px;height:68px"><div class="t" style="left:14.72px;top:22.71px;font-size:25.5px;line-height:25.5px;color:#1c1c1c;font-weight:normal;">2024-09-09 12:23:27.437814+00</div></div>
<div class="clip" style="left:2194px;top:1156px;width:376px;height:68px"><div class="t" style="left:14.92px;top:22.71px;font-size:25.5px;line-height:25.5px;color:#1c1c1c;font-weight:normal;letter-spacing:-0.096px;">2024-09-09 12:23:27.441+00</div></div>
<div class="clip" style="left:2572px;top:1156px;width:338px;height:68px"><div class="t" style="left:15.98px;top:22.71px;font-size:25.5px;line-height:25.5px;color:#1c1c1c;font-weight:normal;">{"id":"_Id9aLyJpMHQLaiQCXkQ7vPz2LmN</div></div>
<div style="position:absolute;left:640px;top:1246px;width:32px;height:32px;box-sizing:border-box;border:2px solid #d2d2d2;border-radius:8px;background:#f3f3f3"></div>
<div class="clip" style="left:754px;top:1226px;width:238px;height:68px"><div class="t" style="left:16.03px;top:22.71px;font-size:25.5px;line-height:25.5px;color:#1c1c1c;font-weight:normal;">30739</div></div>
<div class="clip" style="left:994px;top:1226px;width:440px;height:68px"><div class="t" style="left:15.97px;top:22.71px;font-size:25.5px;line-height:25.5px;color:#1c1c1c;font-weight:normal;letter-spacing:-0.275px;">zHDq4c0F0VBF_TL2_dBZ1</div></div>
<div class="clip" style="left:1438px;top:1226px;width:376px;height:68px"><div class="t" style="left:15.42px;top:22.71px;font-size:25.5px;line-height:25.5px;color:#1c1c1c;font-weight:normal;letter-spacing:-0.188px;">2024-09-09 12:17:36.515+00</div></div>
<div class="clip" style="left:1816px;top:1226px;width:376px;height:68px"><div class="t" style="left:14.72px;top:22.71px;font-size:25.5px;line-height:25.5px;color:#1c1c1c;font-weight:normal;">2024-09-09 12:23:19.020076+00</div></div>
<div class="clip" style="left:2194px;top:1226px;width:376px;height:68px"><div class="t" style="left:14.92px;top:22.71px;font-size:25.5px;line-height:25.5px;color:#1c1c1c;font-weight:normal;letter-spacing:-0.068px;">2024-09-09 12:23:19.021+00</div></div>
<div class="clip" style="left:2572px;top:1226px;width:338px;height:68px"><div class="t" style="left:15.98px;top:22.71px;font-size:25.5px;line-height:25.5px;color:#1c1c1c;font-weight:normal;">{"id":"_Id9aLyJpMHQLaiQCXkQ7vPz2LmN</div></div>
<div style="position:absolute;left:640px;top:1316px;width:32px;height:32px;box-sizing:border-box;border:2px solid #d2d2d2;border-radius:8px;background:#f3f3f3"></div>
<div class="clip" style="left:754px;top:1296px;width:238px;height:68px"><div class="t" style="left:16.03px;top:22.71px;font-size:25.5px;line-height:25.5px;color:#1c1c1c;font-weight:normal;">30738</div></div>
<div class="clip" style="left:994px;top:1296px;width:440px;height:68px"><div class="t" style="left:14.91px;top:22.71px;font-size:25.5px;line-height:25.5px;color:#1c1c1c;font-weight:normal;letter-spacing:0.564px;">FHHUioa3bidd00BHyLeZt</div></div>
<div class="clip" style="left:1438px;top:1296px;width:376px;height:68px"><div class="t" style="left:15.42px;top:22.71px;font-size:25.5px;line-height:25.5px;color:#1c1c1c;font-weight:normal;letter-spacing:-0.188px;">2024-09-09 12:17:36.515+00</div></div>
<div class="clip" style="left:1816px;top:1296px;width:376px;height:68px"><div class="t" style="left:14.72px;top:22.71px;font-size:25.5px;line-height:25.5px;color:#1c1c1c;font-weight:normal;">2024-09-09 12:23:15.234146+00</div></div>
<div class="clip" style="left:2194px;top:1296px;width:376px;height:68px"><div class="t" style="left:14.92px;top:22.71px;font-size:25.5px;line-height:25.5px;color:#1c1c1c;font-weight:normal;letter-spacing:-0.028px;">2024-09-09 12:23:15.237+00</div></div>
<div class="clip" style="left:2572px;top:1296px;width:338px;height:68px"><div class="t" style="left:15.98px;top:22.71px;font-size:25.5px;line-height:25.5px;color:#1c1c1c;font-weight:normal;">{"id":"_Id9aLyJpMHQLaiQCXkQ7vPz2LmN</div></div>
<div style="position:absolute;left:640px;top:1386px;width:32px;height:32px;box-sizing:border-box;border:2px solid #d2d2d2;border-radius:8px;background:#f3f3f3"></div>
<div class="clip" style="left:754px;top:1366px;width:238px;height:68px"><div class="t" style="left:16.03px;top:22.71px;font-size:25.5px;line-height:25.5px;color:#1c1c1c;font-weight:normal;">30737</div></div>
<div class="clip" style="left:994px;top:1366px;width:440px;height:68px"><div class="t" style="left:15.36px;top:22.71px;font-size:25.5px;line-height:25.5px;color:#1c1c1c;font-weight:normal;letter-spacing:0.080px;">bzwXazHgax6UIR58j6Fn3</div></div>
<div class="clip" style="left:1438px;top:1366px;width:376px;height:68px"><div class="t" style="left:15.42px;top:22.71px;font-size:25.5px;line-height:25.5px;color:#1c1c1c;font-weight:normal;letter-spacing:-0.188px;">2024-09-09 12:17:36.515+00</div></div>
<div class="clip" style="left:1816px;top:1366px;width:376px;height:68px"><div class="t" style="left:14.72px;top:22.71px;font-size:25.5px;line-height:25.5px;color:#1c1c1c;font-weight:normal;">2024-09-09 12:23:08.668542+00</div></div>
<div class="clip" style="left:2194px;top:1366px;width:376px;height:68px"><div class="t" style="left:14.92px;top:22.71px;font-size:25.5px;line-height:25.5px;color:#1c1c1c;font-weight:normal;letter-spacing:0.275px;">2024-09-09 12:23:08.67+00</div></div>
<div class="clip" style="left:2572px;top:1366px;width:338px;height:68px"><div class="t" style="left:15.98px;top:22.71px;font-size:25.5px;line-height:25.5px;color:#1c1c1c;font-weight:normal;">{"id":"_Id9aLyJpMHQLaiQCXkQ7vPz2LmN</div></div>
<div style="position:absolute;left:640px;top:1456px;width:32px;height:32px;box-sizing:border-box;border:2px solid #d2d2d2;border-radius:8px;background:#f3f3f3"></div>
<div class="clip" style="left:754px;top:1436px;width:238px;height:68px"><div class="t" style="left:16.03px;top:22.71px;font-size:25.5px;line-height:25.5px;color:#1c1c1c;font-weight:normal;">30736</div></div>
<div class="clip" style="left:994px;top:1436px;width:440px;height:68px"><div class="t" style="left:14.91px;top:22.71px;font-size:25.5px;line-height:25.5px;color:#1c1c1c;font-weight:normal;letter-spacing:0.224px;">Be4KignzoK9YRGNI3Zgks</div></div>
<div class="clip" style="left:1438px;top:1436px;width:376px;height:68px"><div class="t" style="left:15.42px;top:22.71px;font-size:25.5px;line-height:25.5px;color:#1c1c1c;font-weight:normal;letter-spacing:-0.188px;">2024-09-09 12:17:36.515+00</div></div>
<div class="clip" style="left:1816px;top:1436px;width:376px;height:68px"><div class="t" style="left:14.72px;top:22.71px;font-size:25.5px;line-height:25.5px;color:#1c1c1c;font-weight:normal;">2024-09-09 12:23:05.567216+00</div></div>
<div class="clip" style="left:2194px;top:1436px;width:376px;height:68px"><div class="t" style="left:14.92px;top:22.71px;font-size:25.5px;line-height:25.5px;color:#1c1c1c;font-weight:normal;letter-spacing:0.262px;">2024-09-09 12:23:05.57+00</div></div>
<div class="clip" style="left:2572px;top:1436px;width:338px;height:68px"><div class="t" style="left:15.98px;top:22.71px;font-size:25.5px;line-height:25.5px;color:#1c1c1c;font-weight:normal;">{"id":"_Id9aLyJpMHQLaiQCXkQ7vPz2LmN</div></div>
<div style="position:absolute;left:640px;top:1526px;width:32px;height:32px;box-sizing:border-box;border:2px solid #d2d2d2;border-radius:8px;background:#f3f3f3"></div>
<div class="clip" style="left:754px;top:1506px;width:238px;height:68px"><div class="t" style="left:16.03px;top:22.71px;font-size:25.5px;line-height:25.5px;color:#1c1c1c;font-weight:normal;">30735</div></div>
<div class="clip" style="left:994px;top:1506px;width:440px;height:68px"><div class="t" style="left:17.39px;top:22.71px;font-size:25.5px;line-height:25.5px;color:#1c1c1c;font-weight:normal;letter-spacing:0.661px;">_l40sQIRTmMZfcm-MWMPs</div></div>
<div class="clip" style="left:1438px;top:1506px;width:376px;height:68px"><div class="t" style="left:15.42px;top:22.71px;font-size:25.5px;line-height:25.5px;color:#1c1c1c;font-weight:normal;letter-spacing:-0.188px;">2024-09-09 12:17:36.515+00</div></div>
<div class="clip" style="left:1816px;top:1506px;width:376px;height:68px"><div class="t" style="left:14.72px;top:22.71px;font-size:25.5px;line-height:25.5px;color:#1c1c1c;font-weight:normal;">2024-09-09 12:23:02.46183+00</div></div>
<div class="clip" style="left:2194px;top:1506px;width:376px;height:68px"><div class="t" style="left:14.92px;top:22.71px;font-size:25.5px;line-height:25.5px;color:#1c1c1c;font-weight:normal;letter-spacing:0.388px;">2024-09-09 12:23:02.463+00</div></div>
<div class="clip" style="left:2572px;top:1506px;width:338px;height:68px"><div class="t" style="left:15.98px;top:22.71px;font-size:25.5px;line-height:25.5px;color:#1c1c1c;font-weight:normal;">{"id":"_Id9aLyJpMHQLaiQCXkQ7vPz2LmN</div></div>
<div style="position:absolute;left:640px;top:1596px;width:32px;height:32px;box-sizing:border-box;border:2px solid #d2d2d2;border-radius:8px;background:#f3f3f3"></div>
<div class="clip" style="left:754px;top:1576px;width:238px;height:68px"><div class="t" style="left:16.03px;top:22.71px;font-size:25.5px;line-height:25.5px;color:#1c1c1c;font-weight:normal;">30734</div></div>
<div class="clip" style="left:994px;top:1576px;width:440px;height:68px"><div class="t" style="left:15.31px;top:22.71px;font-size:25.5px;line-height:25.5px;color:#1c1c1c;font-weight:normal;letter-spacing:0.383px;">nj336mN5reuRVNZrKHFpF</div></div>
<div class="clip" style="left:1438px;top:1576px;width:376px;height:68px"><div class="t" style="left:15.42px;top:22.71px;font-size:25.5px;line-height:25.5px;color:#1c1c1c;font-weight:normal;letter-spacing:-0.188px;">2024-09-09 12:17:36.515+00</div></div>
<div class="clip" style="left:1816px;top:1576px;width:376px;height:68px"><div class="t" style="left:14.72px;top:22.71px;font-size:25.5px;line-height:25.5px;color:#1c1c1c;font-weight:normal;">2024-09-09 12:22:59.277128+00</div></div>
<div class="clip" style="left:2194px;top:1576px;width:376px;height:68px"><div class="t" style="left:14.92px;top:22.71px;font-size:25.5px;line-height:25.5px;color:#1c1c1c;font-weight:normal;letter-spacing:0.248px;">2024-09-09 12:22:59.279+00</div></div>
<div class="clip" style="left:2572px;top:1576px;width:338px;height:68px"><div class="t" style="left:15.98px;top:22.71px;font-size:25.5px;line-height:25.5px;color:#1c1c1c;font-weight:normal;">{"id":"_Id9aLyJpMHQLaiQCXkQ7vPz2LmN</div></div>
<div style="position:absolute;left:640px;top:1666px;width:32px;height:32px;box-sizing:border-box;border:2px solid #d2d2d2;border-radius:8px;background:#f3f3f3"></div>
<div class="clip" style="left:754px;top:1646px;width:238px;height:68px"><div class="t" style="left:16.03px;top:22.71px;font-size:25.5px;line-height:25.5px;color:#1c1c1c;font-weight:normal;">30733</div></div>
<div class="clip" style="left:994px;top:1646px;width:440px;height:68px"><div class="t" style="left:16.03px;top:22.71px;font-size:25.5px;line-height:25.5px;color:#1c1c1c;font-weight:normal;letter-spacing:0.486px;">3muDHTceTWso9IZj8hHNI</div></div>
<div class="clip" style="left:1438px;top:1646px;width:376px;height:68px"><div class="t" style="left:15.42px;top:22.71px;font-size:25.5px;line-height:25.5px;color:#1c1c1c;font-weight:normal;letter-spacing:-0.188px;">2024-09-09 12:17:36.515+00</div></div>
<div class="clip" style="left:1816px;top:1646px;width:376px;height:68px"><div class="t" style="left:14.72px;top:22.71px;font-size:25.5px;line-height:25.5px;color:#1c1c1c;font-weight:normal;">2024-09-09 12:22:56.03542+00</div></div>
<div class="clip" style="left:2194px;top:1646px;width:376px;height:68px"><div class="t" style="left:14.92px;top:22.71px;font-size:25.5px;line-height:25.5px;color:#1c1c1c;font-weight:normal;letter-spacing:0.344px;">2024-09-09 12:22:56.033+00</div></div>
<div class="clip" style="left:2572px;top:1646px;width:338px;height:68px"><div class="t" style="left:15.98px;top:22.71px;font-size:25.5px;line-height:25.5px;color:#1c1c1c;font-weight:normal;">{"id":"_Id9aLyJpMHQLaiQCXkQ7vPz2LmN</div></div>
<div style="position:absolute;left:640px;top:1736px;width:32px;height:32px;box-sizing:border-box;border:2px solid #d2d2d2;border-radius:8px;background:#f3f3f3"></div>
<div class="clip" style="left:754px;top:1716px;width:238px;height:68px"><div class="t" style="left:16.03px;top:22.71px;font-size:25.5px;line-height:25.5px;color:#1c1c1c;font-weight:normal;">30732</div></div>
<div class="clip" style="left:994px;top:1716px;width:440px;height:68px"><div class="t" style="left:17.39px;top:22.71px;font-size:25.5px;line-height:25.5px;color:#1c1c1c;font-weight:normal;letter-spacing:0.186px;">_La6pddxcKJIbgufATJ1n</div></div>
<div class="clip" style="left:1438px;top:1716px;width:376px;height:68px"><div class="t" style="left:15.42px;top:22.71px;font-size:25.5px;line-height:25.5px;color:#1c1c1c;font-weight:normal;letter-spacing:-0.188px;">2024-09-09 12:17:36.515+00</div></div>
<div class="clip" style="left:1816px;top:1716px;width:376px;height:68px"><div class="t" style="left:14.72px;top:22.71px;font-size:25.5px;line-height:25.5px;color:#1c1c1c;font-weight:normal;">2024-09-09 12:22:50.294983+00</div></div>
<div class="clip" style="left:2194px;top:1716px;width:376px;height:68px"><div class="t" style="left:14.92px;top:22.71px;font-size:25.5px;line-height:25.5px;color:#1c1c1c;font-weight:normal;letter-spacing:0.316px;">2024-09-09 12:22:50.298+00</div></div>
<div class="clip" style="left:2572px;top:1716px;width:338px;height:68px"><div class="t" style="left:15.98px;top:22.71px;font-size:25.5px;line-height:25.5px;color:#1c1c1c;font-weight:normal;">{"id":"_Id9aLyJpMHQLaiQCXkQ7vPz2LmN</div></div>
<div style="position:absolute;left:640px;top:1806px;width:32px;height:32px;box-sizing:border-box;border:2px solid #d2d2d2;border-radius:8px;background:#f3f3f3"></div>
<div class="clip" style="left:754px;top:1786px;width:238px;height:68px"><div class="t" style="left:16.03px;top:22.71px;font-size:25.5px;line-height:25.5px;color:#1c1c1c;font-weight:normal;">30731</div></div>
<div class="clip" style="left:994px;top:1786px;width:440px;height:68px"><div class="t" style="left:15.31px;top:22.71px;font-size:25.5px;line-height:25.5px;color:#1c1c1c;font-weight:normal;letter-spacing:0.192px;">rYbORF2e4YgDt9fKAXaKn</div></div>
<div class="clip" style="left:1438px;top:1786px;width:376px;height:68px"><div class="t" style="left:15.42px;top:22.71px;font-size:25.5px;line-height:25.5px;color:#1c1c1c;font-weight:normal;letter-spacing:-0.188px;">2024-09-09 12:17:36.515+00</div></div>
<div class="clip" style="left:1816px;top:1786px;width:376px;height:68px"><div class="t" style="left:14.72px;top:22.71px;font-size:25.5px;line-height:25.5px;color:#1c1c1c;font-weight:normal;">2024-09-09 12:22:47.221066+00</div></div>
<div class="clip" style="left:2194px;top:1786px;width:376px;height:68px"><div class="t" style="left:14.92px;top:22.71px;font-size:25.5px;line-height:25.5px;color:#1c1c1c;font-weight:normal;letter-spacing:0.091px;">2024-09-09 12:22:47.22+00</div></div>
<div class="clip" style="left:2572px;top:1786px;width:338px;height:68px"><div class="t" style="left:15.98px;top:22.71px;font-size:25.5px;line-height:25.5px;color:#1c1c1c;font-weight:normal;">{"id":"_Id9aLyJpMHQLaiQCXkQ7vPz2LmN</div></div>
<div style="position:absolute;left:640px;top:1876px;width:32px;height:32px;box-sizing:border-box;border:2px solid #d2d2d2;border-radius:8px;background:#f3f3f3"></div>
<div class="clip" style="left:754px;top:1856px;width:238px;height:68px"><div class="t" style="left:16.03px;top:22.71px;font-size:25.5px;line-height:25.5px;color:#1c1c1c;font-weight:normal;">30730</div></div>
<div class="clip" style="left:994px;top:1856px;width:440px;height:68px"><div class="t" style="left:14.91px;top:22.71px;font-size:25.5px;line-height:25.5px;color:#1c1c1c;font-weight:normal;letter-spacing:0.451px;">DYp-7mcyMSIrHefLYIwwH</div></div>
<div class="clip" style="left:1438px;top:1856px;width:376px;height:68px"><div class="t" style="left:15.42px;top:22.71px;font-size:25.5px;line-height:25.5px;color:#1c1c1c;font-weight:normal;letter-spacing:-0.188px;">2024-09-09 12:17:36.515+00</div></div>
<div class="clip" style="left:1816px;top:1856px;width:376px;height:68px"><div class="t" style="left:14.72px;top:22.71px;font-size:25.5px;line-height:25.5px;color:#1c1c1c;font-weight:normal;letter-spacing:-0.187px;">2024-09-09 12:22:44.13721+00</div></div>
<div class="clip" style="left:2194px;top:1856px;width:376px;height:68px"><div class="t" style="left:14.92px;top:22.71px;font-size:25.5px;line-height:25.5px;color:#1c1c1c;font-weight:normal;letter-spacing:0.068px;">2024-09-09 12:22:44.138+00</div></div>
<div class="clip" style="left:2572px;top:1856px;width:338px;height:68px"><div class="t" style="left:15.98px;top:22.71px;font-size:25.5px;line-height:25.5px;color:#1c1c1c;font-weight:normal;">{"id":"_Id9aLyJpMHQLaiQCXkQ7vPz2LmN</div></div>
<div style="position:absolute;left:640px;top:1946px;width:32px;height:32px;box-sizing:border-box;border:2px solid #d2d2d2;border-radius:8px;background:#f3f3f3"></div>
<div class="clip" style="left:754px;top:1926px;width:238px;height:68px"><div class="t" style="left:16.03px;top:22.71px;font-size:25.5px;line-height:25.5px;color:#1c1c1c;font-weight:normal;">30729</div></div>
<div class="clip" style="left:994px;top:1926px;width:440px;height:68px"><div class="t" style="left:15.89px;top:22.71px;font-size:25.5px;line-height:25.5px;color:#1c1c1c;font-weight:normal;letter-spacing:0.073px;">8yUKotr9qGYjK2eFRhgLv</div></div>
<div class="clip" style="left:1438px;top:1926px;width:376px;height:68px"><div class="t" style="left:15.42px;top:22.71px;font-size:25.5px;line-height:25.5px;color:#1c1c1c;font-weight:normal;letter-spacing:-0.188px;">2024-09-09 12:17:36.515+00</div></div>
<div class="clip" style="left:1816px;top:1926px;width:376px;height:68px"><div class="t" style="left:14.72px;top:22.71px;font-size:25.5px;line-height:25.5px;color:#1c1c1c;font-weight:normal;">2024-09-09 12:22:40.986386+00</div></div>
<div class="clip" style="left:2194px;top:1926px;width:376px;height:68px"><div class="t" style="left:14.92px;top:22.71px;font-size:25.5px;line-height:25.5px;color:#1c1c1c;font-weight:normal;letter-spacing:0.388px;">2024-09-09 12:22:40.988+00</div></div>
<div class="clip" style="left:2572px;top:1926px;width:338px;height:68px"><div class="t" style="left:15.98px;top:22.71px;font-size:25.5px;line-height:25.5px;color:#1c1c1c;font-weight:normal;">{"id":"_Id9aLyJpMHQLaiQCXkQ7vPz2LmN</div></div>
<div style="position:absolute;left:640px;top:2016px;width:32px;height:32px;box-sizing:border-box;border:2px solid #d2d2d2;border-radius:8px;background:#f3f3f3"></div>
<div class="clip" style="left:754px;top:1996px;width:238px;height:68px"><div class="t" style="left:16.03px;top:22.71px;font-size:25.5px;line-height:25.5px;color:#1c1c1c;font-weight:normal;">30728</div></div>
<div class="clip" style="left:994px;top:1996px;width:440px;height:68px"><div class="t" style="left:16.00px;top:22.71px;font-size:25.5px;line-height:25.5px;color:#1c1c1c;font-weight:normal;letter-spacing:0.474px;">0L5BAfDaLDl5rQOiqeKPO</div></div>
<div class="clip" style="left:1438px;top:1996px;width:376px;height:68px"><div class="t" style="left:15.42px;top:22.71px;font-size:25.5px;line-height:25.5px;color:#1c1c1c;font-weight:normal;letter-spacing:-0.188px;">2024-09-09 12:17:36.515+00</div></div>
<div class="clip" style="left:1816px;top:1996px;width:376px;height:68px"><div class="t" style="left:14.72px;top:22.71px;font-size:25.5px;line-height:25.5px;color:#1c1c1c;font-weight:normal;">2024-09-09 12:22:37.955419+00</div></div>
<div class="clip" style="left:2194px;top:1996px;width:376px;height:68px"><div class="t" style="left:14.92px;top:22.71px;font-size:25.5px;line-height:25.5px;color:#1c1c1c;font-weight:normal;letter-spacing:0.136px;">2024-09-09 12:22:37.958+00</div></div>
<div class="clip" style="left:2572px;top:1996px;width:338px;height:68px"><div class="t" style="left:15.98px;top:22.71px;font-size:25.5px;line-height:25.5px;color:#1c1c1c;font-weight:normal;">{"id":"_Id9aLyJpMHQLaiQCXkQ7vPz2LmN</div></div>
<div style="position:absolute;left:624px;top:2044px;width:2286px;height:72px;background:#f8f8f8"></div>
<div style="position:absolute;left:624px;top:2044px;width:2286px;height:2px;background:#e3e3e3"></div>
<div style="position:absolute;left:640px;top:2056px;width:55px;height:50px;box-sizing:border-box;border:2px solid #e6e6e6;border-radius:10px;background:#f8f8f8"></div>
<div class="t" style="left:711.41px;top:2069.53px;font-size:23px;line-height:23px;color:#555555;font-weight:normal;letter-spacing:0.064px;">Page</div>
<div style="position:absolute;left:782px;top:2056px;width:94px;height:50px;box-sizing:border-box;border:2px solid #c8c8c8;border-radius:10px;background:#f0f0f0"></div>
<div class="t" style="left:801.25px;top:2069.53px;font-size:23px;line-height:23px;color:#1c1c1c;font-weight:normal;">1</div>
<div class="t" style="left:892.93px;top:2069.53px;font-size:23px;line-height:23px;color:#555555;font-weight:normal;letter-spacing:1.124px;">of 308</div>
<div style="position:absolute;left:979px;top:2056px;width:54px;height:50px;box-sizing:border-box;border:2px solid #dcdcdc;border-radius:10px;background:#f8f8f8"></div>
<div style="position:absolute;left:1051px;top:2056px;width:138px;height:50px;box-sizing:border-box;border:2px solid #dcdcdc;border-radius:10px;background:#f8f8f8"></div>
<div class="t" style="left:1070.25px;top:2069.53px;font-size:23px;line-height:23px;color:#1c1c1c;font-weight:normal;letter-spacing:0.608px;">100 rows</div>
<div class="t" style="left:1221.72px;top:2069.53px;font-size:23px;line-height:23px;color:#555555;font-weight:normal;letter-spacing:0.483px;">30,753 records</div>
<div class="t" style="left:2469.11px;top:2069.53px;font-size:23px;line-height:23px;color:#1c1c1c;font-weight:normal;letter-spacing:0.474px;">Refresh</div>
<div style="position:absolute;left:2591px;top:2053px;width:302px;height:54px;box-sizing:border-box;border:2px solid #e0e0e0;border-radius:12px;background:#f6f6f6"></div>
<div style="position:absolute;left:2595px;top:2057px;width:148px;height:47px;box-sizing:border-box;border:2px solid #d8d8d8;border-radius:10px;background:#efefef;box-shadow:0 1px 2px rgba(0,0,0,0.08)"></div>
<div class="t" style="left:2641.07px;top:2069.11px;font-size:23.5px;line-height:23.5px;color:#1c1c1c;font-weight:normal;letter-spacing:0.630px;-webkit-text-stroke:0.9px #1c1c1c;">Data</div>
<div class="t" style="left:2760.83px;top:2068.68px;font-size:24px;line-height:24px;color:#4a4a4a;font-weight:normal;letter-spacing:1.119px;-webkit-text-stroke:0.8px #4a4a4a;">Definition</div>
<svg style="position:absolute;left:0;top:0" width="2910" height="2116" viewBox="0 0 2910 2116" fill="none" stroke-linecap="round" stroke-linejoin="round"><g stroke="#a8a8a8" stroke-width="1.9" ><path d="M547.9 156.5 L554 150.7 L560.2 156.5 M547.9 163 L554 169.1 L560.2 163"/></g><g stroke="#b4b4b4" stroke-width="1.9" ><path d="M178 215.1 V232.9 M169.1 224 H186.7"/></g><g stroke="#a8a8a8" stroke-width="1.6" ><circle cx="170.8" cy="318.7" r="9.3"/><path d="M177.6 325.5 L182.6 330.6"/></g><g stroke="#a0a0a0" stroke-width="1.4" ><path d="M484.3 308.7 L492 316.4 L499.6 308.7 M484.3 319.3 L492 327 L499.6 319.3"/></g><g stroke="#6e6e6e" stroke-width="2" ><path d="M549.9 307.4 H574 L564.4 318.2 V328.3 L559.2 326.2 V318.2 Z"/></g><g stroke="#acacac" stroke-width="1.6" ><rect x="146.8" y="378.8" width="22.4" height="22.4" rx="3.5"/><path d="M146.8 386.1 H169.2 M154.1 378.8 V401.2"/></g><g stroke="#efaa50" stroke-width="1.9" ><path d="M466 388.9 V383.5 a5.7 5.7 0 0 1 11.3 -0.6"/><rect x="461.3" y="388.9" width="21.5" height="12.8" rx="2.5"/></g><g stroke="#acacac" stroke-width="1.6" ><rect x="146.8" y="434.8" width="22.4" height="22.4" rx="3.5"/><path d="M146.8 442.1 H169.2 M154.1 434.8 V457.2"/></g><g stroke="#acacac" stroke-width="1.6" ><rect x="146.8" y="490.8" width="22.4" height="22.4" rx="3.5"/><path d="M146.8 498.1 H169.2 M154.1 490.8 V513.2"/></g><g stroke="#6e6e6e" stroke-width="1.6" ><rect x="146.8" y="546.8" width="22.4" height="22.4" rx="3.5"/><path d="M146.8 554.1 H169.2 M154.1 546.8 V569.2"/></g><g stroke="#acacac" stroke-width="1.6" ><rect x="146.8" y="602.8" width="22.4" height="22.4" rx="3.5"/><path d="M146.8 610.1 H169.2 M154.1 602.8 V625.2"/></g><g stroke="#efaa50" stroke-width="1.9" ><path d="M347.4 612.9 V607.5 a5.7 5.7 0 0 1 11.3 -0.6"/><rect x="342.70000000000005" y="612.9" width="21.5" height="12.8" rx="2.5"/></g><g stroke="#acacac" stroke-width="1.6" ><rect x="146.8" y="658.8" width="22.4" height="22.4" rx="3.5"/><path d="M146.8 666.1 H169.2 M154.1 658.8 V681.2"/></g><g stroke="#acacac" stroke-width="1.6" ><rect x="146.8" y="714.8" width="22.4" height="22.4" rx="3.5"/><path d="M146.8 722.1 H169.2 M154.1 714.8 V737.2"/></g><g stroke="#acacac" stroke-width="1.6" ><rect x="146.8" y="770.8" width="22.4" height="22.4" rx="3.5"/><path d="M146.8 778.1 H169.2 M154.1 770.8 V793.2"/></g><g fill="#6e6e6e" stroke="none"><circle cx="567.8" cy="557.9" r="2.2"/><circle cx="575.9" cy="557.9" r="2.2"/><circle cx="584" cy="557.9" r="2.2"/></g><g stroke="#666666" stroke-width="2.2" ><path d="M1019.5 41.8 L1025.9 35.6 L1032.2 41.8 M1019.5 47.9 L1025.9 54.3 L1032.2 47.9"/></g><g stroke="#8a8a8a" stroke-width="1.8" ><path d="M1079.3 33.5 L1067.3 56.2"/></g><g stroke="#666666" stroke-width="2.2" ><path d="M1365.6 41.5 L1371.9 35.3 L1378.5 41.5 M1365.6 48.1 L1371.9 54.8 L1378.5 48.1"/></g><g stroke="#8a8a8a" stroke-width="1.8" ><path d="M1441.3 33.6 L1429.1 56.4"/></g><g stroke="#5e5e5e" stroke-width="1.7" ><path d="M1481 34.3 V48.1"/><circle cx="1481" cy="51.8" r="3.7"/><circle cx="1494.9" cy="37.9" r="3.7"/><path d="M1494.9 41.6 V43 a8.8 8.8 0 0 1 -9.6 8.8"/></g><g stroke="#454545" stroke-width="1.9" ><path d="M2770 35.5 H2783.5 L2790.5 46 V53.8 a1.2 1.2 0 0 1 -1.2 1.2 H2770 M2770 48.2 H2780 L2782.5 45.2 H2790.5"/></g><rect x="2748.2" y="31" width="27.6" height="27.7" rx="7" fill="#df7a1c" stroke="none"/><circle cx="2762" cy="44.9" r="8.9" fill="#fcfcfc" stroke="none"/><g stroke="#df7a1c" stroke-width="2.4" ><path d="M2762 40.3 V45.6"/></g><circle cx="2762" cy="49.3" r="1.3" fill="#df7a1c" stroke="none"/><g stroke="#3f3f3f" stroke-width="1.9" ><circle cx="2845.9" cy="44.9" r="11.9"/><path d="M2842.2 41.8 a3.8 3.8 0 1 1 5.6 3.4 c-1.1 .6 -1.8 1.2 -1.8 2.3"/></g><circle cx="2846" cy="50.6" r="1.2" fill="#3f3f3f" stroke="none"/><g stroke="#6a6a6a" stroke-width="2.2" ><path d="M687.9 122.8 H712.5 L703.2 133.5 V144.8 L697.2 142.3 V133.5 Z"/></g><g stroke="#1a8754" stroke-width="2.2" ><path d="M855.2 126.5 H871.5 M855.2 134 H871.5 M855.2 141.5 H871.5"/><path d="M848.6 126.5 h0.01 M848.6 134 h0.01 M848.6 141.5 h0.01" stroke-width="2.6" stroke-linecap="square"/></g><g stroke="#1c1c1c" stroke-width="2" ><path d="M1174.2 130.5 L1180.5 136.8 L1186.8 130.5"/></g><g stroke="#a8a8a8" stroke-width="1.6" ><circle cx="1979" cy="133.8" r="11.4"/><path d="M1979 128.6 V139 M1973.8 133.8 H1984.2"/></g><g stroke="#aaaaaa" stroke-width="1.4" ><path d="M2390.4 131 L2396.3 137.1 L2402.4 131"/></g><g stroke="#aaaaaa" stroke-width="1.5" ><path d="M2476.5 124.6 L2496.8 132.1 L2488.2 135 L2485 144.4 Z"/></g><g stroke="#aaaaaa" stroke-width="1.6" ><path d="M2715.6 126.5 L2707.8 134.1 L2715.6 141.3 M2724.3 126.5 L2732.1 134.1 L2724.3 141.3"/></g><g stroke="#2ec27e" stroke-width="2.2" ><circle cx="777.4" cy="209.1" r="6.6"/><path d="M784.0 208.9 H800.1 M790.6 208.9 V214.3 H796.1999999999999 V208.9"/></g><g stroke="#2ec27e" stroke-width="2.2" ><circle cx="1018.4" cy="209.1" r="6.6"/><path d="M1025.0 208.9 H1041.1 M1031.6 208.9 V214.3 H1037.2 V208.9"/></g><g stroke="#a8a8a8" stroke-width="1.6" ><path d="M947.7 206.4 L954.5 213.5 L962 206.4"/></g><g stroke="#a8a8a8" stroke-width="1.6" ><path d="M1389.7 206.4 L1396.5 213.5 L1404 206.4"/></g><g stroke="#a8a8a8" stroke-width="1.6" ><path d="M1769.7 206.4 L1776.5 213.5 L1784 206.4"/></g><g stroke="#a8a8a8" stroke-width="1.6" ><path d="M2147.7 206.4 L2154.5 213.5 L2162 206.4"/></g><g stroke="#a8a8a8" stroke-width="1.6" ><path d="M2525.7 206.4 L2532.5 213.5 L2540 206.4"/></g><g stroke="#a8a8a8" stroke-width="1.9" ><path d="M677.2 2081 H658.7 M668 2072.1 L658.7 2081 L668 2089.9"/></g><g stroke="#555555" stroke-width="1.9" ><path d="M996.7 2081 H1016 M1006.9 2072.1 L1016 2081 L1006.9 2089.9"/></g><g stroke="#aaaaaa" stroke-width="1.5" transform="translate(2425.6 2066.3) scale(1.2)"><path d="M3 12a9 9 0 0 1 9-9 9.75 9.75 0 0 1 6.74 2.74L21 8"/><path d="M21 3v5h-5"/><path d="M21 12a9 9 0 0 1-9 9 9.75 9.75 0 0 1-6.74-2.74L3 16"/><path d="M8 16H3v5"/></g></svg>
</div></body></html>
